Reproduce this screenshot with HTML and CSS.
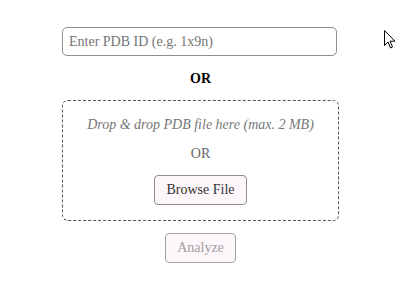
FILE: index.html
```html
<html lang="en">
    <head>
        <meta http-equiv="content-type" content="text/html; charset=utf-8" />
        <link rel="stylesheet" href="styles.css">
    </head>
    <body>
        <form class="form">
            <input class="pdbInput" type="text" placeholder="Enter PDB ID (e.g. 1x9n)">
            <label class="orTitle">OR</label>
            <div class="dropZone">
                <label class="dropText">Drop &amp; drop PDB file here (max. 2 MB)</label>
                <label class="dropOr">OR</label>
                <button class="button" type="button">Browse File</button>
            </div>
            <button class="button analyze" type="button" disabled>Analyze</button>
        </form>
        <svg class="cursor" width="12" height="19" viewBox="0 0 12 19">
            <path d="M0.5 0.5 L0.5 15.5 L4 12 L6.5 18 L8.5 17 L6 11.2 L11 11.2 Z" fill="#fff" stroke="#000" stroke-width="1"/>
        </svg>
    </body>
</html>
```
FILE: styles.css
```css
* {
    font-family: 'Liberation Serif', 'Times New Roman', serif;
}

body {
    margin: 0;
    background-color: #ffffff;
}

.form {
    display: flex;
    flex-direction: column;
    align-items: center;
    width: 277px;
    margin: auto;
    padding-top: 27px;
}

.pdbInput {
    align-self: flex-start;
    width: 275px;
    height: 29px;
    border: 1px solid #8f8f8f;
    border-radius: 5px;
    padding: 0 6px;
    font-size: 14px;
    outline: none;
    box-sizing: border-box;
}

.pdbInput::placeholder {
    color: #757575;
}

.orTitle {
    margin-top: 15px;
    font-size: 14px;
    font-weight: bold;
    color: black;
}

.dropZone {
    display: flex;
    flex-direction: column;
    align-items: center;
    width: 277px;
    height: 121px;
    margin-top: 13px;
    border: 1px dashed #555555;
    border-radius: 6px;
    box-sizing: border-box;
    padding-top: 16px;
}

.dropText {
    font-size: 14px;
    font-style: italic;
    color: #777777;
}

.dropOr {
    margin-top: 13px;
    font-size: 14px;
    color: #666666;
}

.button {
    margin-top: 13px;
    height: 30px;
    padding: 0 11.5px;
    font-size: 14px;
    color: #333333;
    background-color: #fdf7fb;
    border: 1px solid #8f8f8f;
    border-radius: 4px;
}

.analyze {
    margin-top: 12px;
    color: #a0a0a0;
    border-color: #a0a0a0;
}

.cursor {
    position: absolute;
    left: 384px;
    top: 30px;
}
```
